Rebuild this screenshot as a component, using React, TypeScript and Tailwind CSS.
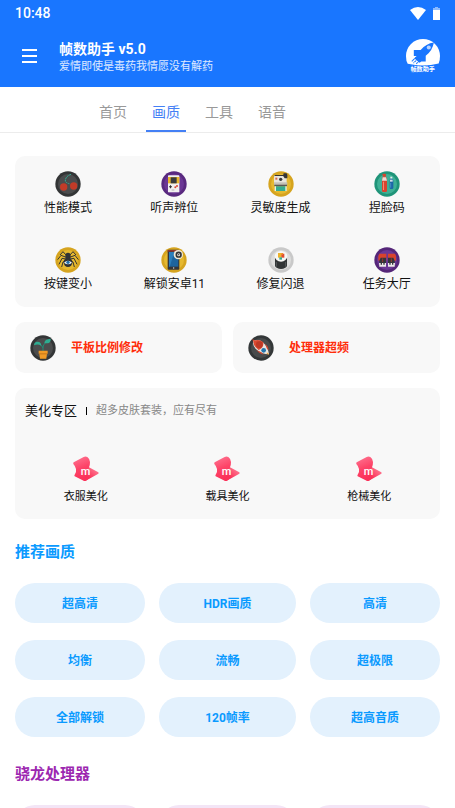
import { ReactNode, useState } from "react"

type Item = { label: string; icon: ReactNode }

function Disc({ ring, fill, children }: { ring: string; fill: string; children: ReactNode }) {
  return (
    <svg viewBox="0 0 78 78" className="size-[26px]" aria-hidden="true">
      <circle cx="39" cy="39" r="38" fill={ring} />
      <circle cx="39" cy="39" r="30" fill={fill} />
      {children}
    </svg>
  )
}

const CherryIcon = () => (
  <Disc ring="#333536" fill="#4b4c4d">
    <path d="M48 10C36 14 30 22 31 31q3 5 12 7" fill="none" stroke="#2fae93" strokeWidth="3" strokeDasharray="6 2" />
    <circle cx="26" cy="48" r="11" fill="#c23b28" />
    <circle cx="56" cy="45" r="11" fill="#c23b28" />
  </Disc>
)

const ConsoleIcon = () => (
  <Disc ring="#59297f" fill="#6b3795">
    <rect x="21" y="13" width="34" height="51" rx="2" fill="#f1eff0" />
    <rect x="21" y="18" width="34" height="19" fill="#e9b52c" />
    <rect x="29" y="19" width="18" height="18" fill="#393b3c" />
    <path d="M24 46h3v-3h3v3h3v3h-3v3h-3v-3h-3z" fill="#333" />
    <circle cx="48" cy="45" r="3" fill="#d7442e" />
    <circle cx="43" cy="49" r="3" fill="#d7442e" />
    <path d="M32 57h8" stroke="#999" strokeWidth="2" />
  </Disc>
)

const PrinterIcon = () => (
  <Disc ring="#d6a41f" fill="#e6b92f">
    <path d="M20 13h36v28H18V17z" fill="#e8e5dc" />
    <path d="M20 12h27v3H20zM47 7h9l2 4v11h-8l-5-8z" fill="#353535" />
    <path d="M22 20h6v6h-6z" fill="#d8664e" />
    <circle cx="38" cy="25" r="5" fill="#35383a" />
    <path d="M18 34h40v7H18z" fill="#c3c0b8" />
    <path d="M19 41h38v5H19z" fill="#5a5a58" />
    <path d="M22 46h32v14H22z" fill="#36ad90" />
    <path d="M20 46h4v14h-4zM52 46h4v14h-4z" fill="#e7f0e8" />
  </Disc>
)

const BottlesIcon = () => (
  <Disc ring="#1f9479" fill="#3eb095">
    <rect x="26" y="8" width="10" height="9" rx="2" fill="#d9442f" />
    <path d="M26 17h10l3 8v34q0 4-4 4h-7q-4 0-4-4V25z" fill="#d9442f" />
    <path d="M26 19h10l3 10H24z" fill="#e8ded8" />
    <path d="M27 32h3v25h-3z" fill="#f38b75" />
    <path d="M49 17h6v6h-6z" fill="#e7edf1" />
    <path d="M48 23h8l2 6v21q0 4-4 4h-4q-3 0-3-4V29z" fill="#1d67a6" />
    <path d="M48 26h8v6h-8z" fill="#cfdfe6" />
    <path d="M50 36v14" stroke="#5ba0d5" strokeWidth="2" />
  </Disc>
)

const SpiderIcon = () => (
  <Disc ring="#d6a41f" fill="#e6b92f">
    <path
      d="M35 26L24 14l-9 10M34 31L18 25 8 38M33 36l-12-2-9 18M32 41l-8 4-4 15M43 26l11-12 9 10M44 31l16-6 10 13M45 36l12-2 9 18M46 41l8 4 4 15"
      fill="none"
      stroke="#333"
      strokeWidth="3"
    />
    <ellipse cx="39" cy="27" rx="8" ry="10" fill="#303235" />
    <ellipse cx="39" cy="46" rx="13" ry="14" fill="#303235" />
    <path d="M27 47q12-11 24 0-12 10-24 0z" fill="#edf3f7" />
    <circle cx="39" cy="46" r="5" fill="#216fa9" />
  </Disc>
)

const PhoneIcon = () => (
  <Disc ring="#d6a41f" fill="#e6b92f">
    <rect x="20" y="8" width="35" height="60" rx="3" fill="#353538" />
    <path d="M20 9h31v5H20z" fill="#8f382d" />
    <path d="M24 15h28v44H24z" fill="#1d649e" />
    <path d="M24 15h16L26 59h-2z" fill="#2b7ebb" />
    <circle cx="38" cy="63" r="2" fill="#ddd" />
    <circle cx="52" cy="23" r="14" fill="#f1ead8" />
    <circle cx="53" cy="23" r="7" fill="#e6e3db" stroke="#333537" strokeWidth="5" />
    <circle cx="53" cy="23" r="2" fill="#333" />
  </Disc>
)

const SushiIcon = () => (
  <Disc ring="#c9c9c9" fill="#dddddc">
    <path d="M21 29v28q4 8 18 9 14-1 18-9V29z" fill="#303334" />
    <path d="M25 45v14M53 45v14" stroke="#565a5b" strokeWidth="3" />
    <ellipse cx="39" cy="28" rx="19" ry="16" fill="#f7f7f4" />
    <path d="M30 18h11v14H30z" fill="#edb32b" />
    <path d="M40 20h9v12h-9z" fill="#e04c31" />
    <path d="M34 31h8v7h-8z" fill="#35ae93" />
    <path d="M40 18h5v5h-5z" fill="#ef8d22" />
  </Disc>
)

const BootsIcon = () => (
  <Disc ring="#552679" fill="#6b3795">
    <path d="M16 20h21v21H13V27zM42 20h21l3 7v14H42z" fill="#d7432d" />
    <path d="M20 32h16v26H16V41zM42 32h16l4 9v17H42z" fill="#34363a" />
    <path d="M15 48h5v5h4v-5h4v5h4v-5h4v11H16zM42 48h4v5h4v-5h4v5h4v-5h5l-1 11H42z" fill="#eee9ec" />
    <path d="M26 34v11M52 34v11" stroke="#99362c" strokeWidth="3" />
  </Disc>
)

const PlantIcon = () => (
  <Disc ring="#333536" fill="#4b4c4d">
    <path d="M39 49V36q0-6 8-13M39 39q-2-7-10-11" fill="none" stroke="#218b76" strokeWidth="3" />
    <path d="M12 31Q13 17 28 21q6 4 6 11-11-6-22-1zM43 25Q43 12 62 11q1 13-10 14z" fill="#2eac91" />
    <path d="M26 47h27v9h-2l-2 15H30l-2-15h-2z" fill="#f19a25" />
    <path d="M27 55h25v3H27z" fill="#c77619" />
  </Disc>
)

const RocketIcon = () => (
  <Disc ring="#333738" fill="#484b4c">
    <path d="M13 12l9 5-6 5z" fill="#df4930" />
    <path d="M17 18q16-8 29 5 14 13 17 35-21 0-35-12-17-14-11-28z" fill="#e8e5e0" />
    <path d="M17 18q15-8 29 4 2 15-14 23-18-12-15-27z" fill="#dd4930" />
    <circle cx="34" cy="29" r="10" fill="#bd3926" />
    <circle cx="47" cy="46" r="7" fill="#2375ad" />
    <path d="M51 26q10 7 11 20l-5-5zM25 45q8 11 22 14l-7-7z" fill="#d64630" />
    <path d="M55 54l8 7-3-8z" fill="#f19a25" />
  </Disc>
)

function SkinIcon() {
  return (
    <svg viewBox="0 0 78 78" className="size-[26px]" aria-hidden="true">
      <defs>
        <linearGradient id="skin" x1="0" y1="0" x2="0.3" y2="1">
          <stop offset="0" stopColor="#ff7a96" />
          <stop offset="0.55" stopColor="#fd4468" />
          <stop offset="1" stopColor="#fb3159" />
        </linearGradient>
        <linearGradient id="fold" x1="0" y1="1" x2="1" y2="0">
          <stop offset="0.3" stopColor="#fb3159" />
          <stop offset="1" stopColor="#ff8ba0" />
        </linearGradient>
      </defs>
      <path
        d="M2 19L32 3q5-3 11 0 8 6 8 15 0 9-3 16L54 62 41 73q-4 3-9 1L5 61q-2-2 0-5 6-8 4-17Q7 30 1 24q-1-3 1-5z"
        fill="url(#skin)"
      />
      <path d="M48 34l28 15q2 2 0 4L41 73q-4 3-9 1z" fill="url(#fold)" />
      <text x="38" y="58" textAnchor="middle" fill="#fff" fontSize="33" fontWeight="500" fontFamily="Roboto, sans-serif">
        m
      </text>
    </svg>
  )
}

function Logo() {
  return (
    <svg viewBox="0 0 100 100" className="size-[34px]" aria-hidden="true">
      <path d="M5 73Q0 65 0 50a50 50 0 01100 0q0 14-4 22-43 11-91 1z" fill="#fff" />
      <path d="M82 10q-23 3-39 22H23v18h8l-6 8 15 12 5-4h13V49q20-15 24-39z" fill="#1976ff" />
      <circle cx="67" cy="25" r="6" fill="#b8d4ff" />
      <path d="M30 53L17 66M36 57L22 71M42 61L30 73" stroke="#1976ff" strokeWidth="3" />
      <path d="M20 65l10 8M25 59l10 9" stroke="#fff" strokeWidth="2" />
      <text x="49" y="95" textAnchor="middle" fill="#fff" fontSize="18" fontWeight="700" fontFamily="Noto Sans CJK SC, sans-serif">
        帧数助手
      </text>
    </svg>
  )
}

const tools: Item[] = [
  { label: "性能模式", icon: <CherryIcon /> },
  { label: "听声辨位", icon: <ConsoleIcon /> },
  { label: "灵敏度生成", icon: <PrinterIcon /> },
  { label: "捏脸码", icon: <BottlesIcon /> },
  { label: "按键变小", icon: <SpiderIcon /> },
  { label: "解锁安卓11", icon: <PhoneIcon /> },
  { label: "修复闪退", icon: <SushiIcon /> },
  { label: "任务大厅", icon: <BootsIcon /> },
]

const shortcuts: Item[] = [
  { label: "平板比例修改", icon: <PlantIcon /> },
  { label: "处理器超频", icon: <RocketIcon /> },
]

const tabs = ["首页", "画质", "工具", "语音"]
const skins = ["衣服美化", "载具美化", "枪械美化"]
const qualities = ["超高清", "HDR画质", "高清", "均衡", "流畅", "超极限", "全部解锁", "120帧率", "超高音质"]

export default function App() {
  const [active, setActive] = useState("画质")

  return (
    <div className="flex h-dvh flex-col overflow-hidden bg-white font-[Roboto,'Noto_Sans_CJK_SC',sans-serif] text-[#111]">
      {/* Header */}
      <header className="shrink-0 bg-[#1976ff] text-white">
        <div className="flex h-6 items-center justify-between px-[15px] pt-0.5">
          <span className="text-sm leading-5 font-medium">10:48</span>
          <div className="flex items-center gap-[7px]">
            <svg viewBox="0 0 16 13" className="h-[13px] w-4" aria-hidden="true">
              <path d="M0 3Q8-3 16 3L8 13z" fill="#fff" />
            </svg>
            <svg viewBox="0 0 7 13" className="h-[13px] w-[7px]" aria-hidden="true">
              <path d="M2 0h3v1h2v3H0V1h2z" fill="#8bbaff" />
              <path d="M0 3h7v10H0z" fill="#fff" />
            </svg>
          </div>
        </div>
        <div className="flex h-[63px] items-center px-[15px]">
          <button type="button" aria-label="菜单" className="flex w-11 pl-[7px]">
            <svg viewBox="0 0 15 14" className="h-3.5 w-[15px]" aria-hidden="true">
              <path d="M0 1h15M0 7h15M0 13h15" stroke="#fff" strokeWidth="2" />
            </svg>
          </button>
          <div className="flex-1 pt-1">
            <h1 className="text-sm leading-[18px] font-bold">帧数助手 v5.0</h1>
            <p className="text-[11px] leading-[18px] text-white/85">爱情即使是毒药我情愿没有解药</p>
          </div>
          <Logo />
        </div>
      </header>

      {/* Tabs */}
      <nav className="flex h-[46px] shrink-0 gap-[13px] border-b border-[#ececec] pl-[93px]">
        {tabs.map((t) => (
          <button
            key={t}
            type="button"
            onClick={() => setActive(t)}
            className={`w-10 border-b-2 pt-1.5 text-sm ${
              active === t ? "border-[#4480f5] text-[#4480f5]" : "border-transparent text-[#999]"
            }`}
          >
            {t}
          </button>
        ))}
      </nav>

      <main className="min-h-0 flex-1 overflow-y-auto px-[15px] pt-[23px] [scrollbar-width:none]">
        <section className="grid grid-cols-4 gap-y-7 rounded-[10px] bg-[#f8f8f8] pt-[15px] pb-3">
          {tools.map((t) => (
            <button key={t.label} type="button" className="flex flex-col items-center text-xs leading-[22px]">
              {t.icon}
              {t.label}
            </button>
          ))}
        </section>

        <section className="mt-[15px] grid grid-cols-2 gap-[11px]">
          {shortcuts.map((s) => (
            <button
              key={s.label}
              type="button"
              className="flex h-[51px] items-center gap-[15px] rounded-[10px] bg-[#f8f8f8] px-[15px] text-xs font-bold text-[#ff2d0a]"
            >
              {s.icon}
              {s.label}
            </button>
          ))}
        </section>

        <section className="mt-[15px] rounded-[10px] bg-[#f8f8f8] pt-3 pb-[11px]">
          <div className="flex items-center px-2.5">
            <h2 className="text-[13px] leading-[22px]">美化专区</h2>
            <span className="mx-[9px] h-2 w-px bg-black" />
            <p className="text-[11px] leading-[22px] text-[#888]">超多皮肤套装，应有尽有</p>
          </div>
          <div className="mt-[34px] grid grid-cols-3">
            {skins.map((s) => (
              <button key={s} type="button" className="flex flex-col items-center gap-1 text-[11px] leading-[22px]">
                <SkinIcon />
                {s}
              </button>
            ))}
          </div>
        </section>

        {/* Quality presets */}
        <section className="mt-[23px]">
          <h2 className="text-[15px] leading-5 font-bold text-[#0a9aff]">推荐画质</h2>
          <div className="mt-[21px] grid grid-cols-[130fr_137fr_130fr] gap-x-3.5 gap-y-[17px]">
            {qualities.map((q) => (
              <button
                key={q}
                type="button"
                className="h-10 rounded-full bg-[#e3f1fd] pt-0.5 text-xs font-bold text-[#0a9aff]"
              >
                {q}
              </button>
            ))}
          </div>
        </section>

        {/* Snapdragon presets */}
        <section className="mt-[27px]">
          <h2 className="text-[15px] leading-5 font-bold text-[#9c27b0]">骁龙处理器</h2>
          <div className="mt-[21px] grid grid-cols-[130fr_137fr_130fr] gap-x-3.5">
            {[1, 2, 3].map((n) => (
              <button key={n} type="button" aria-label={`骁龙处理器 ${n}`} className="h-10 rounded-full bg-[#f3e5f6]" />
            ))}
          </div>
        </section>
      </main>
    </div>
  )
}
